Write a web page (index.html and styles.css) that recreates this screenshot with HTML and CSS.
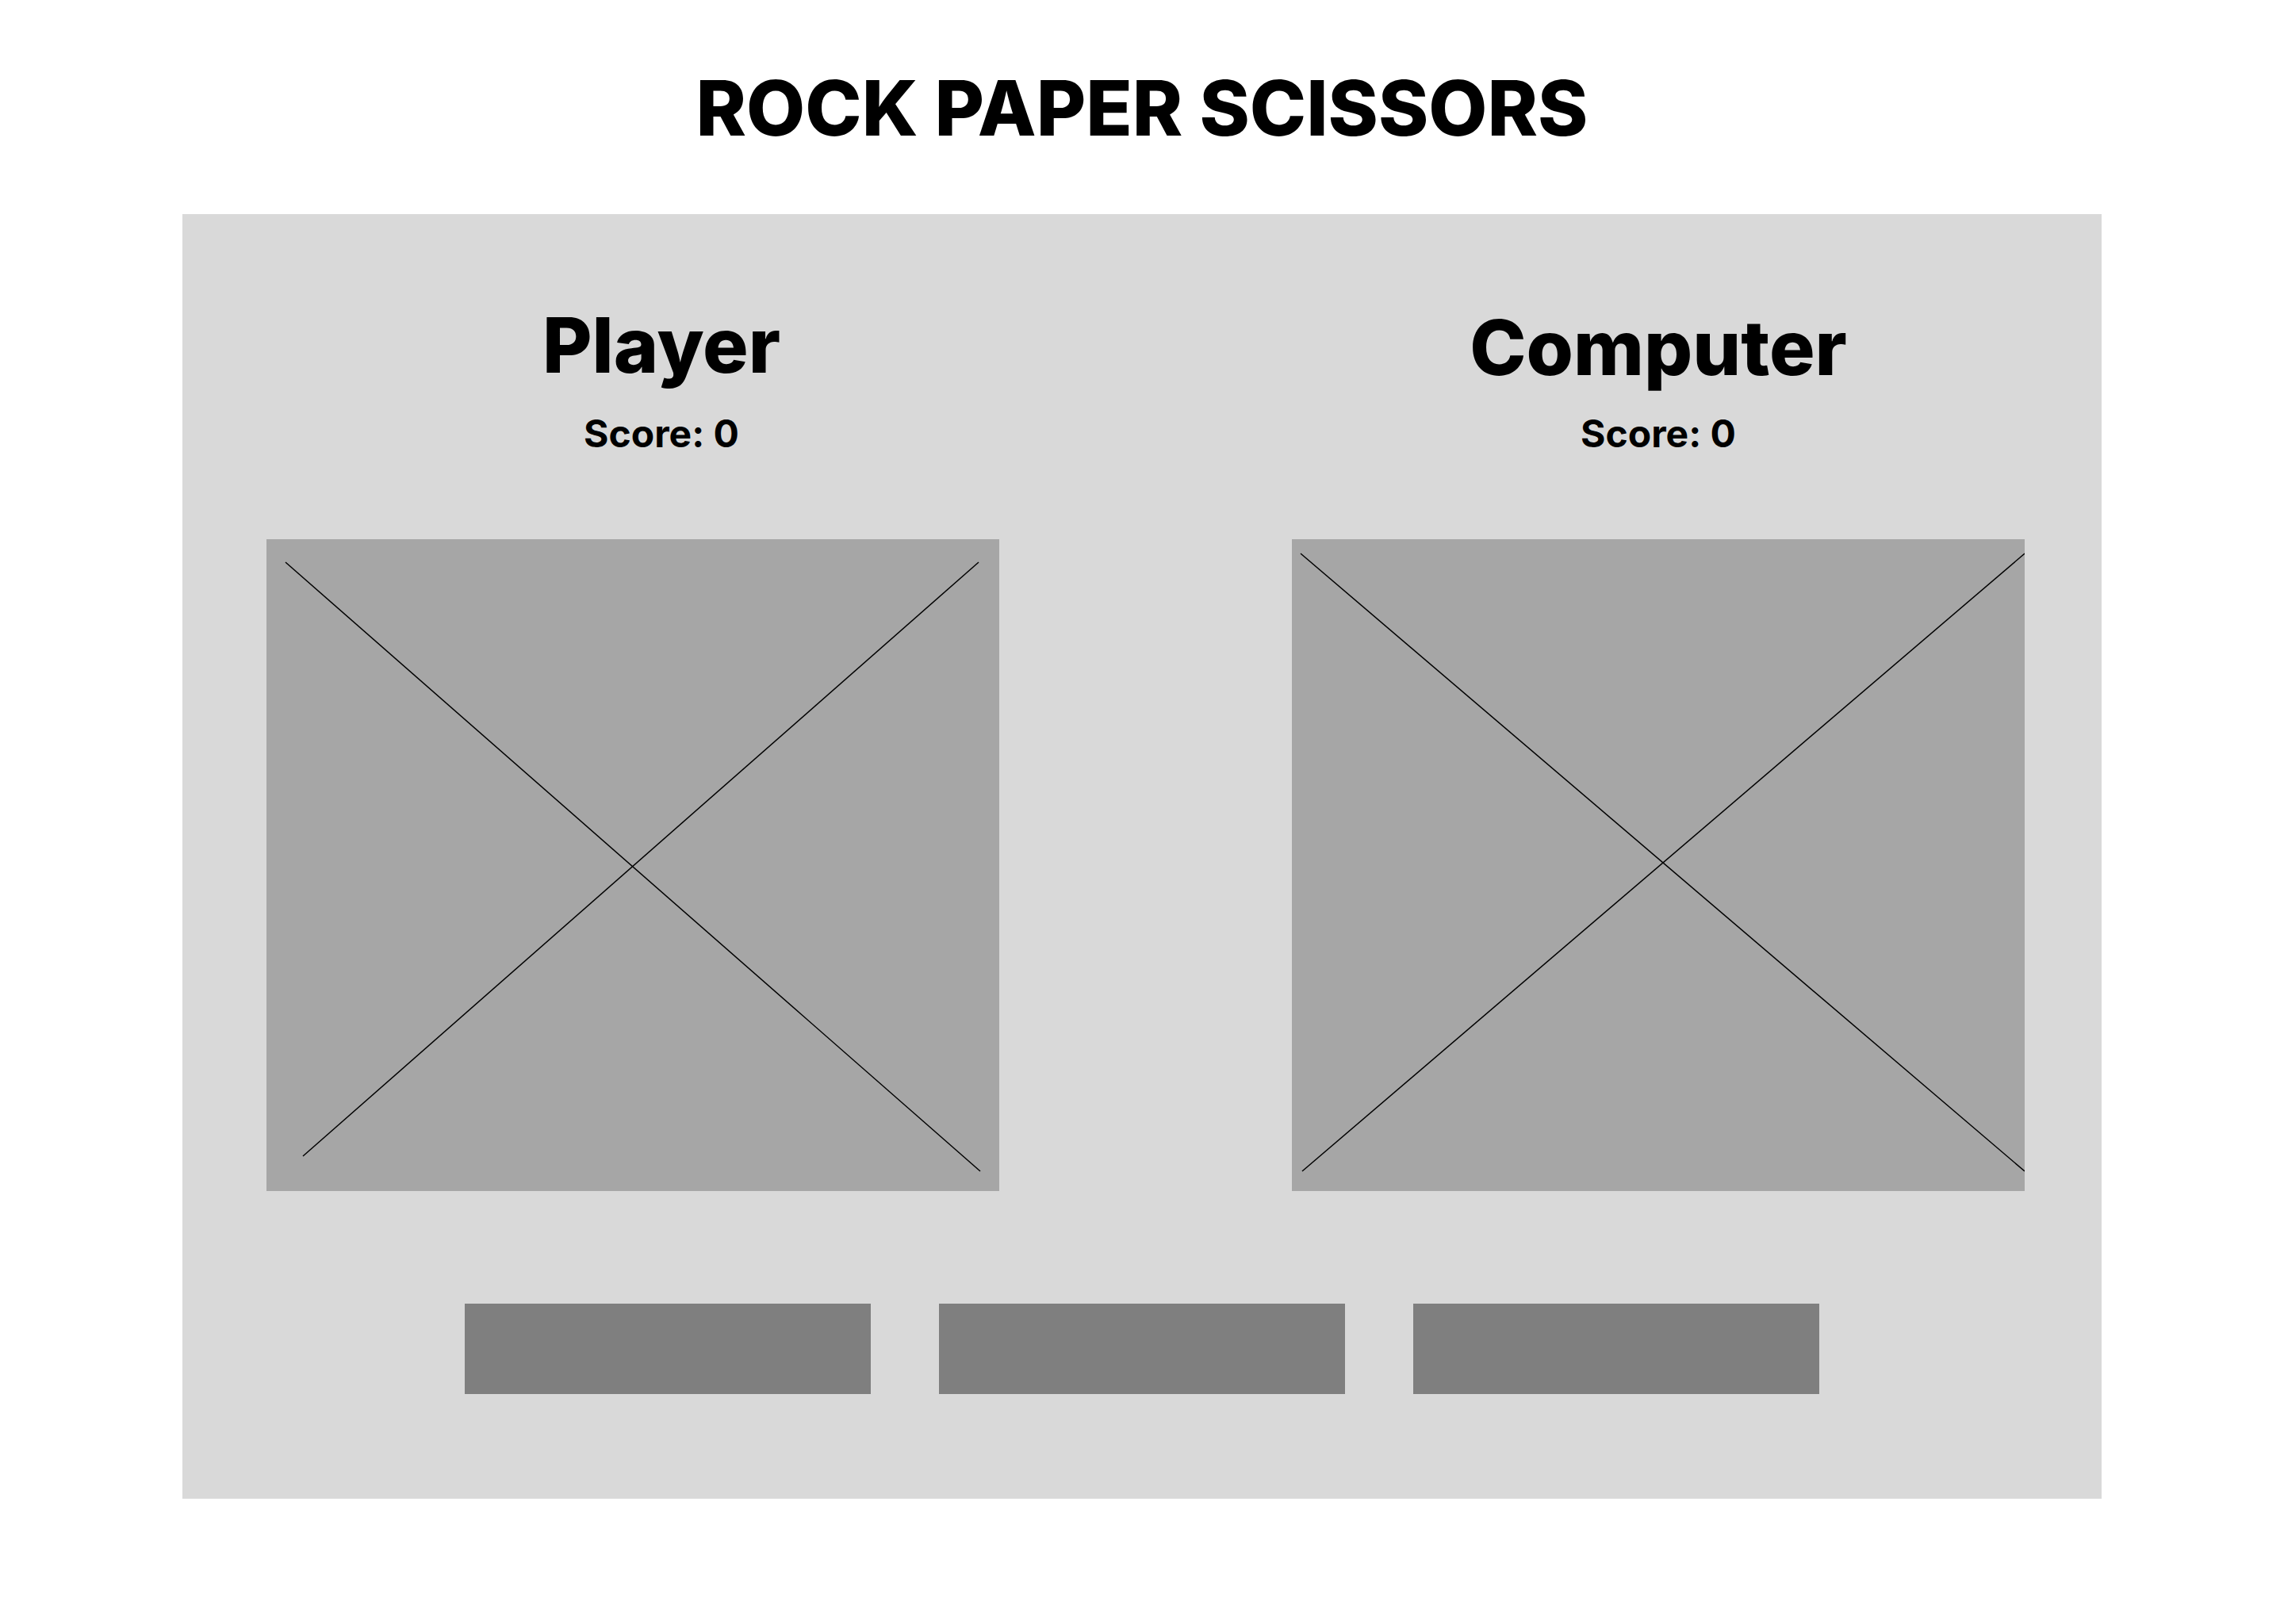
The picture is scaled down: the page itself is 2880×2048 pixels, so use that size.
FILE: index.html
```html
<!DOCTYPE html>
<html lang="en">
<head>
  <meta charset="UTF-8" />
  <meta name="viewport" content="width=device-width, initial-scale=1.0"/>
  <title>Rock Paper Scissors</title>
  <link rel="stylesheet" href="styles.css">
</head>
<body>
  <h1 class="title">ROCK PAPER SCISSORS</h1>

  <main class="board">
    <section class="players">
      <div class="player player-left">
        <h2 class="player-name">Player</h2>
        <p class="score">Score: <span id="playerScore">0</span></p>
        <div class="choice-box">
          <svg viewBox="0 0 924 822" width="924" height="822">
            <line x1="24" y1="29" x2="900" y2="797" />
            <line x1="898" y1="29" x2="46" y2="778" />
          </svg>
        </div>
      </div>

      <div class="player player-right">
        <h2 class="player-name">Computer</h2>
        <p class="score">Score: <span id="computerScore">0</span></p>
        <div class="choice-box">
          <svg viewBox="0 0 924 822" width="924" height="822">
            <line x1="11" y1="18" x2="924" y2="797" />
            <line x1="924" y1="18" x2="13" y2="797" />
          </svg>
        </div>
      </div>
    </section>

    <div class="controls">
      <button class="move-btn" data-move="rock"></button>
      <button class="move-btn" data-move="paper"></button>
      <button class="move-btn" data-move="scissors"></button>
    </div>
  </main>
</body>
</html>
```

FILE: styles.css
```css
body {
  margin: 0;
  background-color: #ffffff;
  font-family: Inter, "Noto Sans", sans-serif;
  color: #000000;
}

.title {
  margin: 88px 0 86px;
  font-size: 96px;
  font-weight: 800;
  line-height: 1;
  text-align: center;
}

.board {
  width: 2420px;
  height: 1620px;
  margin: 0 auto;
  background-color: #d9d9d9;
  box-sizing: border-box;
  padding-top: 117px;
}

.players {
  display: grid;
  grid-template-columns: 924px 924px;
  column-gap: 369px;
  padding: 0 97px 0 106px;
}

.player {
  display: flex;
  flex-direction: column;
  align-items: center;
}

.player-left .player-name,
.player-left .score {
  padding-left: 72px;
}

.player-right .player-name {
  margin-top: 3px;
  margin-bottom: -3px;
}

.player-name {
  margin: 0;
  font-size: 96px;
  font-weight: 800;
  line-height: 1;
}

.score {
  margin: 40px 0 0;
  font-size: 48px;
  font-weight: 700;
  line-height: 1;
}

.choice-box {
  width: 924px;
  height: 822px;
  margin-top: 109px;
  background-color: #a6a6a6;
}

.choice-box svg {
  display: block;
}

.choice-box line {
  stroke: #000000;
  stroke-width: 1.5;
}

.controls {
  display: flex;
  justify-content: center;
  gap: 86px;
  padding-top: 142px;
}

.move-btn {
  width: 512px;
  height: 114px;
  border: none;
  padding: 0;
  background-color: #7f7f7f;
  cursor: pointer;
}
```
